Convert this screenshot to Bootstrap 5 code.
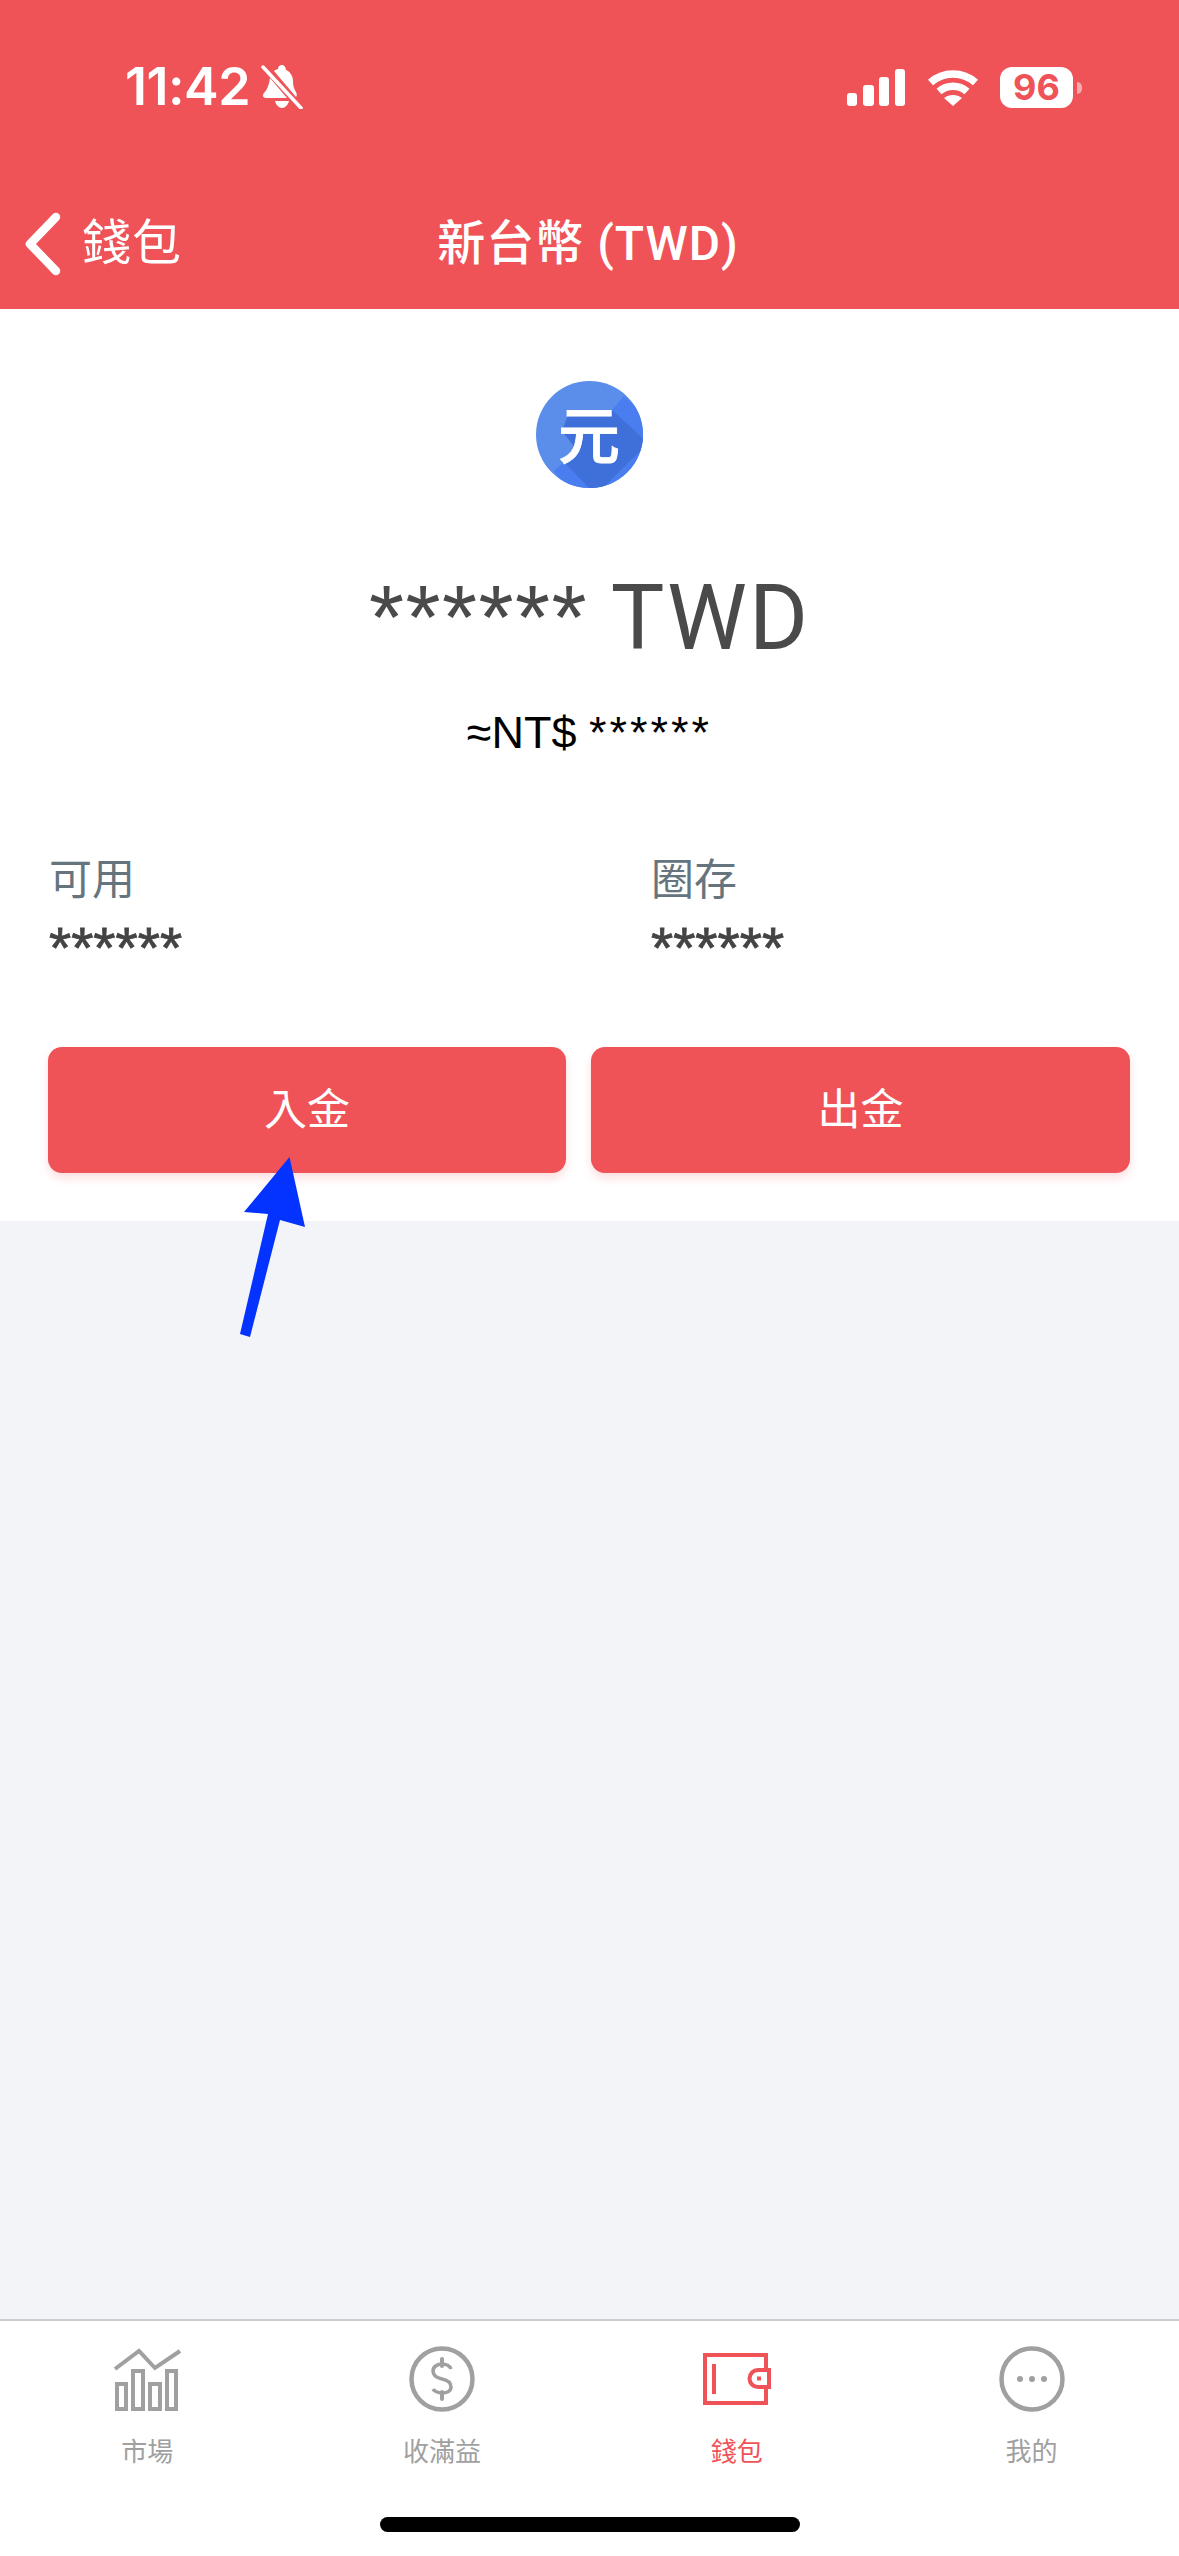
<!DOCTYPE html>
<html lang="zh-Hant">
<head>
    <meta charset="UTF-8">
    <title>新台幣 (TWD)</title>
    <link href="https://cdn.jsdelivr.net/npm/bootstrap@5.3.3/dist/css/bootstrap.min.css" rel="stylesheet">
    <script src="https://cdn.jsdelivr.net/npm/bootstrap@5.3.3/dist/js/bootstrap.bundle.min.js"></script>
    <meta name="viewport" content="width=device-width, initial-scale=1">
    <style>
        body { margin: 0; background: #f3f4f8; font-family: Roboto, "Noto Sans CJK TC", sans-serif; }
        .app-page { position: relative; width: 1179px; height: 2556px; background: #f3f4f8; }
        .top-area { height: 309px; background: #ef5358; color: #fff; }
        .status-row { height: 130px; padding: 60px 97px 0 125px; }
        .clock { font-family: Inter, sans-serif; font-weight: 600; font-size: 52px; line-height: 54px; letter-spacing: -.5px; }
        .bell-icon { width: 42px; height: 44px; margin-left: 11px; }
        .status-right { margin-top: 7px; }
        .signal-icon { width: 58px; height: 38px; }
        .wifi-icon { width: 50px; height: 38px; margin-left: 23px; }
        .battery-box { width: 73px; height: 41px; margin-left: 22px; background: #fff; border-radius: 12px; color: #ef5358; font-family: Inter, sans-serif; font-weight: 700; font-size: 36px; line-height: 41px; text-align: center; }
        .battery-nub { width: 5px; height: 12px; margin-left: 4px; background: rgba(255,255,255,.5); border-radius: 0 6px 6px 0; }
        .title-bar { display: grid; grid-template-columns: 1fr auto 1fr; height: 179px; padding: 48px 0 0; margin-right: 3px; }
        .back-link { padding-left: 25px; }
        .back-icon { width: 38px; height: 64px; }
        .back-label { font-size: 49px; margin-left: 19px; letter-spacing: 1px; line-height: 60px; }
        .page-title { font-size: 48px; font-weight: 500; line-height: 60px; letter-spacing: 1px; }
        .white-area { height: 912px; background: #fff; padding-top: 72px; }
        .coin-icon { display: block; width: 107px; height: 107px; margin: 0 auto; }
        .balance-main { font-size: 90px; line-height: 100px; color: #4a4a4a; margin-top: 80px; letter-spacing: 2px; }
        .star-text { font-family: "Liberation Sans", sans-serif; letter-spacing: 1.500px; }
        .balance-fiat { font-family: "Liberation Sans", sans-serif; font-size: 45px; line-height: 54px; color: #000; margin-top: 37px; }
        .balance-fiat .star-text { letter-spacing: 3px; }
        .stat-wrap { padding: 0 0 0 49px; margin-top: 92px; }
        .stat-col { width: 602px; }
        .stat-label { font-size: 43px; line-height: 56px; color: #66757d; }
        .stat-value { font-family: "Liberation Sans", sans-serif; font-size: 57px; line-height: 56px; height: 56px; margin-top: 12px; color: #444; -webkit-text-stroke: .8px #444; }
        .action-row { padding: 0 49px 0 48px; margin-top: 71px; gap: 25px; }
        .action-btn { height: 126px; border: 0; border-radius: 14px; background: #ef5358; color: #fff; font-size: 43px; box-shadow: 0 5px 10px rgba(240,85,91,.2); }
        .action-btn:hover { background: #ef5358; color: #fff; }
        .action-left { width: 518px; }
        .action-right { width: 539px; }
        .grey-area { height: 1098px; }
        .tab-area { height: 237px; background: #fff; border-top: 2px solid #ccc; }
        .tab-cell { width: 25%; padding-top: 25px; color: #a0a0a0; }
        .tab-active { color: #ef5358; }
        .tab-icon { display: block; width: 70px; height: 66px; margin: 0 auto; }
        .tab-label { font-size: 26px; line-height: 36px; margin-top: 22px; }
        .home-bar { width: 420px; height: 15px; margin: 47px auto 0; background: #000; border-radius: 8px; }
        .note-arrow { position: absolute; left: 0; top: 0; width: 1179px; height: 2556px; pointer-events: none; }
    </style>
</head>
<body>
<div class="app-page">
    <header class="top-area">
        <div class="status-row d-flex justify-content-between align-items-start">
            <div class="d-flex align-items-center">
                <span class="clock">11:42</span>
                <svg class="bell-icon" viewBox="0 0 42 44" fill="#fff">
                    <path d="M21 0c-2 0-4 1-4 4-1 0-3 1-4 2l22 26c1-1 1-3 0-5-2-3-3-6-3-11 0-6-4-10-7-11 0-3-2-5-4-5zM9 13C8 20 6 25 3 28c-2 2-1 5 2 5h21L9 13zM14 36c1 4 4 7 7 7s6-3 7-7z"/>
                    <path d="M2 2l38 41" stroke="#fff" stroke-width="3.500" stroke-linecap="round"/>
                </svg>
            </div>
            <div class="status-right d-flex align-items-center">
                <svg class="signal-icon" viewBox="0 0 58 38" fill="#fff">
                    <rect x="0" y="24" width="10" height="13" rx="3"/>
                    <rect x="16" y="16" width="11" height="21" rx="3"/>
                    <rect x="32" y="8" width="10" height="29" rx="3"/>
                    <rect x="48" y="0" width="10" height="37" rx="3"/>
                </svg>
                <svg class="wifi-icon" viewBox="0 0 50 38" fill="none" stroke="#fff" stroke-width="7.500">
                    <path d="M2.500 13.500C15 2 35 2 47.500 13.500"/>
                    <path d="M11 22.500c8-7 20-7 28 0"/>
                    <path d="M25 37l-9-8c5-4 13-4 18 0z" fill="#fff" stroke="none"/>
                </svg>
                <div class="battery-box">96</div>
                <div class="battery-nub"></div>
            </div>
        </div>
        <nav class="title-bar align-items-center">
            <a class="back-link d-flex align-items-center text-white text-decoration-none" href="#">
                <svg class="back-icon" viewBox="0 0 38 64" fill="none" stroke="#fff" stroke-width="8.500" stroke-linecap="round" stroke-linejoin="round"><path d="M31 5L5 32l26 27"/></svg>
                <span class="back-label">錢包</span>
            </a>
            <div class="page-title">新台幣 (TWD)</div>
            <div></div>
        </nav>
    </header>

    <main class="white-area">
        <svg class="coin-icon" viewBox="0 0 107 107">
            <defs><clipPath id="coinClip"><circle cx="53.500" cy="53.500" r="53.500"/></clipPath></defs>
            <g clip-path="url(#coinClip)">
                <rect width="107" height="107" fill="#5b8dea"/>
                <path d="M88 15L76 29 42 63 28 81 18 90 36 115H115V40z" fill="#4a7df0"/>
                <path d="M32 34H71L76 29 112 62 60 114 28 81 40 68 26 50z" fill="#3f6fd8"/>
                <text x="53" y="78" text-anchor="middle" font-family="Noto Sans CJK TC, sans-serif" font-weight="500" font-size="62" fill="#fff" stroke="#fff" stroke-width=".8">元</text>
            </g>
        </svg>
        <div class="balance-main text-center"><span class="star-text">******</span> TWD</div>
        <div class="balance-fiat text-center">≈NT$ <span class="star-text">******</span></div>
        <div class="stat-wrap d-flex">
            <div class="stat-col">
                <div class="stat-label">可用</div>
                <div class="stat-value">******</div>
            </div>
            <div>
                <div class="stat-label">圈存</div>
                <div class="stat-value">******</div>
            </div>
        </div>
        <div class="action-row d-flex">
            <button type="button" class="btn action-btn action-left">入金</button>
            <button type="button" class="btn action-btn action-right">出金</button>
        </div>
    </main>

    <div class="grey-area"></div>

    <footer class="tab-area">
        <div class="d-flex text-center">
            <div class="tab-cell">
                <svg class="tab-icon" viewBox="0 0 70 66" fill="none" stroke="currentColor" stroke-width="4">
                    <path d="M3 23L27 5 43 22 68 5"/>
                    <rect x="5" y="38" width="9" height="25"/>
                    <rect x="21" y="25" width="10" height="38"/>
                    <rect x="38" y="38" width="10" height="25"/>
                    <rect x="55" y="25" width="9" height="38"/>
                </svg>
                <div class="tab-label">市場</div>
            </div>
            <div class="tab-cell">
                <svg class="tab-icon" viewBox="0 0 70 66" fill="none" stroke="currentColor" stroke-width="4.500">
                    <circle cx="35" cy="33" r="30.500"/>
                    <path d="M44 23c-1-3-5-5-9-5-5 0-9 3-9 7 0 5 4 7 9 8 5 1 9 3 9 8 0 4-4 6-9 6-4 0-8-2-9-4" stroke-width="3.500"/>
                    <path d="M35 13v7M35 46v7" stroke-width="4" stroke-linecap="round"/>
                </svg>
                <div class="tab-label">收滿益</div>
            </div>
            <div class="tab-cell tab-active">
                <svg class="tab-icon" viewBox="0 0 70 66" fill="none" stroke="currentColor" stroke-width="4">
                    <rect x="3" y="9" width="61" height="48"/>
                    <path d="M12 18v30" stroke-width="4"/>
                    <path d="M67 24H56a8 8 0 0 0 0 17h11z" fill="#fff"/>
                    <rect x="55" y="30.500" width="4" height="4" fill="currentColor" stroke="none"/>
                </svg>
                <div class="tab-label">錢包</div>
            </div>
            <div class="tab-cell">
                <svg class="tab-icon" viewBox="0 0 70 66" fill="none" stroke="currentColor" stroke-width="4.500">
                    <circle cx="35" cy="33" r="30.500"/>
                    <g fill="currentColor" stroke="none"><circle cx="23" cy="33" r="3"/><circle cx="35" cy="33" r="3"/><circle cx="47" cy="33" r="3"/></g>
                </svg>
                <div class="tab-label">我的</div>
            </div>
        </div>
        <div class="home-bar"></div>
    </footer>

    <svg class="note-arrow" viewBox="0 0 1179 2556">
        <polygon points="289.500,1157 305,1227 280,1220 250,1337 240,1334 268,1214 244,1212" fill="#0433ff"/>
    </svg>
</div>
</body>
</html>
